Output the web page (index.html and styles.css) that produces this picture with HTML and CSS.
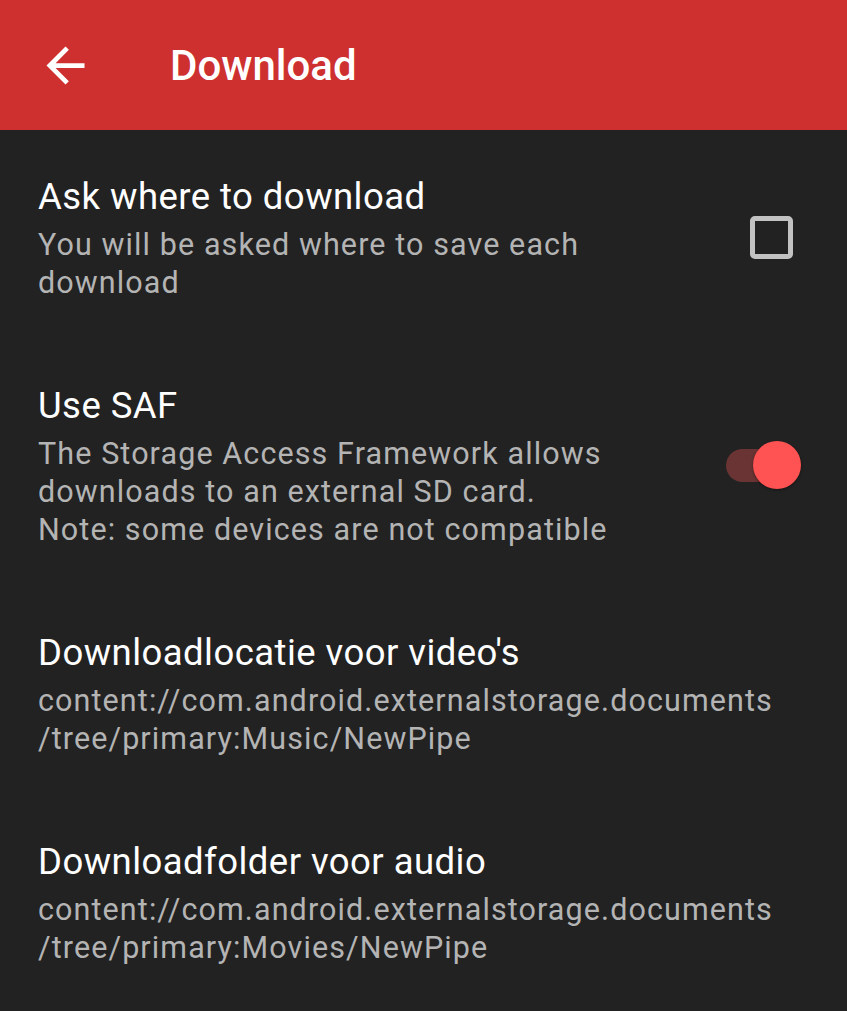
FILE: index.html
```html
<!DOCTYPE html>
<html lang="en">
<head>
    <meta charset="UTF-8">
    <meta name="viewport" content="width=device-width, initial-scale=1.0">
    <title>Download</title>
    <link rel="stylesheet" href="styles.css">
</head>
<body>
    <div class="toolbar">
        <svg class="back-icon" viewBox="0 0 24 24" width="57" height="57">
            <path fill="#fff" d="M20 11H7.83l5.59-5.59L12 4l-8 8 8 8 1.41-1.41L7.83 13H20v-2z"/>
        </svg>
        <h1 class="toolbar-title">Download</h1>
    </div>
    <div class="pref-list">
        <div class="pref">
            <div class="pref-text">
                <div class="pref-title">Ask where to download</div>
                <div class="pref-summary">You will be asked where to save each download</div>
            </div>
            <div class="pref-widget">
                <div class="checkbox"></div>
            </div>
        </div>
        <div class="pref">
            <div class="pref-text">
                <div class="pref-title">Use SAF</div>
                <div class="pref-summary">The Storage Access Framework allows downloads to an external SD card.<br>Note: some devices are not compatible</div>
            </div>
            <div class="pref-widget">
                <div class="switch">
                    <div class="switch-track"></div>
                    <div class="switch-thumb"></div>
                </div>
            </div>
        </div>
        <div class="pref">
            <div class="pref-text">
                <div class="pref-title">Downloadlocatie voor video's</div>
                <div class="pref-summary">content://com.android.externalstorage.documents<br>/tree/primary:Music/NewPipe</div>
            </div>
        </div>
        <div class="pref">
            <div class="pref-text">
                <div class="pref-title">Downloadfolder voor audio</div>
                <div class="pref-summary">content://com.android.externalstorage.documents<br>/tree/primary:Movies/NewPipe</div>
            </div>
        </div>
    </div>
</body>
</html>
```

FILE: styles.css
```css
:root {
    --primary: #cd302f;
    --window-bg: #222222;
    --title-color: #ffffff;
    --summary-color: #b4b4b4;
    --accent: #ff5252;
}

html, body {
    margin: 0;
    padding: 0;
}

body {
    background: var(--window-bg);
    font-family: Roboto, 'Noto Sans', sans-serif;
    min-height: 100vh;
}

.toolbar {
    height: 130px;
    background: var(--primary);
    display: flex;
    align-items: center;
    padding-left: 37px;
    box-sizing: border-box;
}

.back-icon {
    display: block;
    flex-shrink: 0;
}

.toolbar-title {
    margin: 0 0 0 76px;
    color: #fff;
    font-size: 42px;
    font-weight: 500;
    letter-spacing: 0;
}

.pref-list {
    padding-top: 2px;
}

.pref {
    display: flex;
    align-items: center;
    padding: 40px 46px 39px 38px;
}

.pref-text {
    flex: 1;
    min-width: 0;
}

.pref-title {
    color: var(--title-color);
    font-size: 36.5px;
    letter-spacing: 0.45px;
    line-height: 50px;
}

.pref-summary {
    color: var(--summary-color);
    font-size: 30.5px;
    letter-spacing: 1.1px;
    line-height: 38px;
    margin-top: 4px;
}

.pref-widget {
    width: 121px;
    display: flex;
    justify-content: flex-end;
    align-items: center;
    flex-shrink: 0;
}

.checkbox {
    width: 43px;
    height: 43px;
    box-sizing: border-box;
    border: 5px solid #c2c2c2;
    border-radius: 5px;
    margin-right: 8px;
}

.switch {
    position: relative;
    width: 75px;
    height: 48px;
}

.switch-track {
    position: absolute;
    left: 0;
    top: 8px;
    width: 64px;
    height: 33px;
    border-radius: 17px;
    background: #6b3434;
}

.switch-thumb {
    position: absolute;
    right: 0;
    top: 0;
    width: 48px;
    height: 48px;
    border-radius: 50%;
    background: var(--accent);
    box-shadow: 0 1px 3px rgba(0, 0, 0, 0.45);
}
```
